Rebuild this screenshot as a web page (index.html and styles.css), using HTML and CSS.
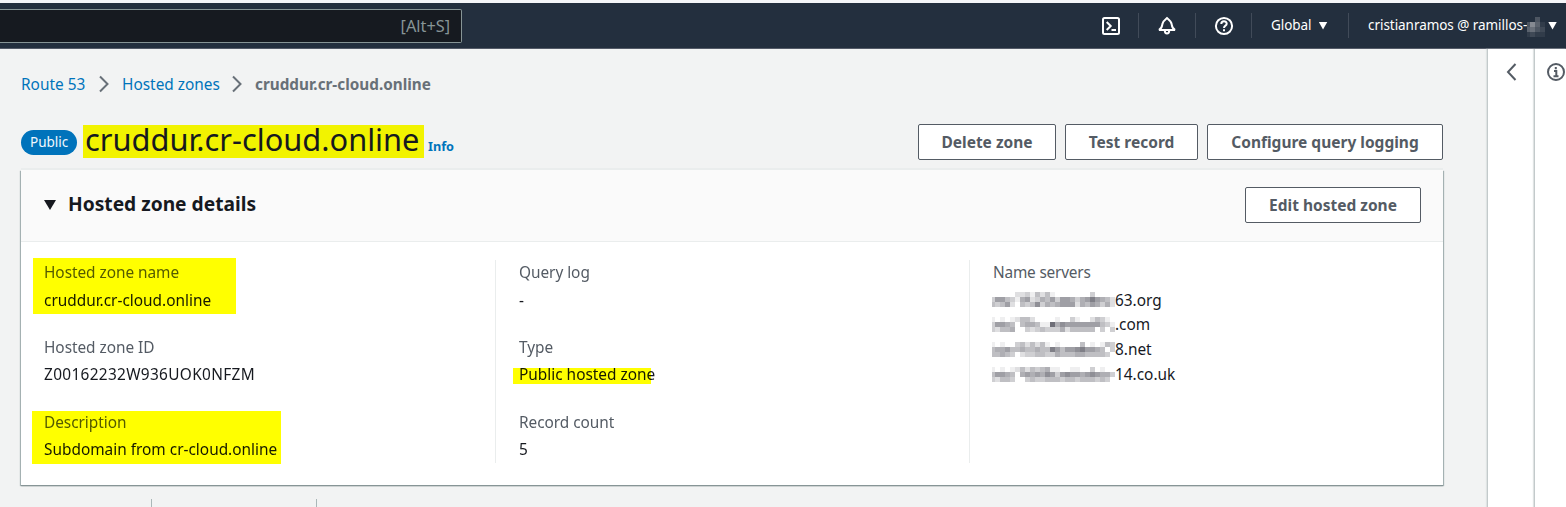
FILE: index.html
```html
<!DOCTYPE html>
<html lang="en">
<head>
<meta charset="utf-8">
<title>Route 53 - Hosted zone</title>
<link rel="stylesheet" href="styles.css">
</head>
<body>
<header class="topbar">
  <div class="search"><span class="hint">[Alt+S]</span></div>
  <nav class="tools">
    <div class="tool shell"><svg width="20" height="20" viewBox="0 0 20 20"><rect x="2" y="2" width="16" height="16" rx="1.5"/><path d="M5.700 6l4 4-4 4M10.500 14H15"/></svg></div>
    <div class="tool bell"><svg width="20" height="20" viewBox="0 0 20 20"><path d="M2 14c3-1.600 3-3.500 3.400-6C5.900 5.200 7.500 4 10 2c2.500 2 4.100 3.200 4.600 6 .4 2.500.4 4.400 3.400 6zM7.800 14.500c0 4 4.400 4 4.400 0"/></svg></div>
    <div class="tool help"><svg width="20" height="20" viewBox="0 0 20 20"><circle cx="10" cy="10" r="8.100"/><path d="M7.300 8c0-3.600 5.400-3.500 5.400-.3 0 2-2.700 1.800-2.700 4.300M10 13.300v1.900"/></svg></div>
    <div class="tool region"><span>Global</span><i class="caret"></i></div>
    <div class="tool account"><span>cristianramos @ ramillos-</span><svg class="mosaic" data-rows="0030,3741,4532,1211" data-first="3" data-dark="1"></svg><i class="caret"></i></div>
  </nav>
</header>
<div class="shellbody">
  <main class="main">
    <div class="crumbs">
      <a class="service">Route 53</a>
      <svg width="12" height="18" viewBox="0 0 12 18"><path d="M2 1.500l7.500 7.500L2 16.500"/></svg>
      <a class="zones">Hosted zones</a>
      <svg width="12" height="18" viewBox="0 0 12 18"><path d="M2 1.500l7.500 7.500L2 16.500"/></svg>
      <b>cruddur.cr-cloud.online</b>
    </div>
    <div class="titlebar">
      <span class="badge">Public</span>
      <h1 class="title">cruddur.cr-cloud.online</h1>
      <a class="info">Info</a>
      <div class="actions">
        <button class="btn delete">Delete zone</button>
        <button class="btn test">Test record</button>
        <button class="btn config">Configure query logging</button>
      </div>
    </div>
    <section class="card">
      <div class="cardhead">
        <i class="caret dark"></i>
        <h2>Hosted zone details</h2>
        <button class="btn edit">Edit hosted zone</button>
      </div>
      <div class="cols">
        <div class="col">
          <dl class="mark name"><dt>Hosted zone name</dt><dd>cruddur.cr-cloud.online</dd></dl>
          <dl><dt>Hosted zone ID</dt><dd class="zone-id">Z00162232W936UOK0NFZM</dd></dl>
          <dl class="mark desc"><dt>Description</dt><dd>Subdomain from cr-cloud.online</dd></dl>
        </div>
        <div class="col">
          <dl><dt>Query log</dt><dd>-</dd></dl>
          <dl class="mark type"><dt>Type</dt><dd>Public hosted zone</dd></dl>
          <dl><dt>Record count</dt><dd>5</dd></dl>
        </div>
        <div class="col">
          <dl><dt class="servers">Name servers</dt>
          <dd class="ns"><svg class="mosaic" data-first="3" data-rows="0000022314241000000030000,3664315623546366535686542,4346204347354566625465352"></svg><span>63.org</span></dd>
          <dd class="ns"><svg class="mosaic" data-first="3" data-rows="1010124420000100310024310,3665404554119576666666431,3244500323433352444440303"></svg><span>.com</span></dd>
          <dd class="ns"><svg class="mosaic" data-first="3" data-rows="1010034242410100004010143,4556445445448646678665403,4454302334433544455444430"></svg><span>8.net</span></dd>
          <dd class="ns"><svg class="mosaic" data-first="3" data-rows="1010124243451100110030100,4665405656576367665676553,3244300343344434434443430"></svg><span>14.co.uk</span></dd>
          </dl>
        </div>
      </div>
    </section>
    <div class="tabs"><i></i><i></i></div>
  </main>
  <aside class="rail back"><svg width="14" height="20" viewBox="0 0 14 20"><path d="M10.500 2L3 10l7.500 8"/></svg></aside>
  <aside class="rail help-rail"><svg width="20" height="20" viewBox="0 0 20 20"><circle cx="10" cy="10" r="8"/><path d="M8 9h2.300v5M7.500 14.200h5M9.800 5v2.200"/></svg></aside>
</div>
<script src="app.js"></script>
</body>
</html>
```
FILE: styles.css
```css
* { box-sizing: border-box; }
body { margin: 0; width: 1566px; height: 507px; overflow: hidden; background: #f2f3f3; font: 15.4px/20px "Noto Sans", "Open Sans", sans-serif; color: #16191f; }
h1, h2, dl, dd { margin: 0; }
span, a, b, h1, h2, dd { white-space: nowrap; }
svg { display: block; fill: none; flex: none; }
.topbar { height: 49px; background: #232f3e; border-top: 3px solid #f4f5f8; border-bottom: 1px solid #545b68; display: flex; justify-content: space-between; align-items: flex-start; }
.search { width: 462px; height: 34px; margin-top: 6px; background: #161a20; border: 1px solid #879596; border-left: 0; border-radius: 0 2px 2px 0; display: flex; justify-content: flex-end; padding: 6px 11px 0 0; color: #879596; }
.hint { font-size: 16.3px; }
.tools { display: flex; padding-top: 10px; color: #fff; font-size: 13.5px; letter-spacing: -.05px; }
.tool { height: 25px; display: flex; align-items: center; border-left: 1px solid #414b59; }
.tool svg { stroke: #fff; stroke-width: 2; }
.tool .mosaic { stroke: none; margin-top: 2px; }
.tool span { margin-top: -1px; }
.shell { border: 0; width: 37px; }
.bell { width: 57px; padding-left: 18px; }
.help { width: 56px; padding-left: 18px; }
.region { width: 97px; padding-left: 19px; }
.account { width: 218px; padding-left: 19px; }
.account span { width: 159px; }
.caret { width: 9px; height: 8px; background: #fff; clip-path: polygon(0 0, 100% 0, 50% 100%); margin-left: 7px; flex: none; }
.account .caret { margin-left: 3px; }
.dark { background: #16191f; }
.shellbody { display: flex; height: 458px; }
.main { width: 1487px; padding: 25px 0 0 21px; }
.crumbs { display: flex; height: 20px; align-items: center; }
.crumbs a, .info { color: #0073bb; }
.crumbs a { padding-top: 2px; }
.crumbs .service { width: 65px; }
.crumbs .zones { width: 97px; }
.crumbs b { color: #687078; font-size: 15.3px; }
.crumbs svg { margin: 0 12px; stroke: #687078; stroke-width: 2; }
.titlebar { display: flex; height: 36px; margin-top: 30px; width: 1422px; align-items: flex-start; }
.badge { width: 56px; height: 25px; margin-top: 6px; border-radius: 13px; background: #0073bb; color: #f2f8fd; font-size: 13.5px; line-height: 24px; padding-left: 9px; }
.title { width: 341px; height: 33px; margin: 1px 0 0 6px; padding-left: 2px; background: #f2f300; font-weight: 400; font-size: 30.8px; line-height: 29px; }
.info { font-size: 12.7px; font-weight: 700; margin: 12px 0 0 4px; }
.actions { display: flex; gap: 9px; margin-left: auto; }
.btn { height: 36px; padding: 0; background: #fff; border: 1px solid #545b64; border-radius: 2px; font: 700 15.5px/34px "Noto Sans", sans-serif; color: #545b64; }
.delete { width: 138px; }
.test { width: 133px; }
.config { width: 236px; }
.edit { width: 176px; margin: 0 0 1px auto; }
.card { width: 1422px; height: 315px; margin-top: 10px; background: #fff; box-shadow: 0 -1px #eaeded, 0 -2px #eaeded, 0 1px 1px 0 #879596, 1px 1px 1px 0 #aab7b8, -1px 1px 1px 0 #aab7b8; }
.cardhead { height: 72px; background: #fafafa; border-bottom: 1px solid #eaeded; display: flex; align-items: center; padding: 0 22px 1px 23px; }
.cardhead .caret { width: 12px; height: 10px; margin: 0; }
h2 { font-size: 19.2px; line-height: 24px; margin: 0 0 2px 12px; }
.cols { display: grid; grid-template-columns: 474px 474px 1fr; padding-top: 18px; }
.col { height: 203px; padding-left: 23px; border-left: 1px solid #eaeded; isolation: isolate; }
.col:first-child { border: 0; }
dl { height: 75px; position: relative; padding-top: 3px; }
dt { color: #545b64; height: 27px; font-size: 15.4px; letter-spacing: -.04px; }
dl:first-child dt { height: 28px; }
dd { height: 20px; }
.servers { letter-spacing: -.2px; }
.zone-id { letter-spacing: .33px; }
.mark::after { content: ""; position: absolute; background: #ff0; mix-blend-mode: multiply; }
.name::after { left: -11px; top: -2px; width: 203px; height: 56px; }
.desc::after { left: -12px; top: 1px; width: 249px; height: 53px; }
.type::after { left: -6px; top: 33px; width: 138px; height: 16px; }
.ns { display: flex; height: 25px; }
.ns .mosaic { margin: 1px 0 0 -1px; }
.ns + .ns span { margin-top: -1px; }
.tabs { display: flex; padding: 14px 0 0 130px; }
.tabs i { width: 165px; height: 10px; border-left: 1px solid #aab7b8; }
.rail { background: #fff; border-left: 1px solid #c3cacb; box-shadow: -1px 0 1px #dfe3e3; padding-top: 13px; flex: none; }
.rail svg { stroke: #545b64; stroke-width: 2; }
.back { width: 47px; padding-left: 17px; }
.help-rail { width: 32px; padding-left: 11px; }
```
FILE: app.js
```js
const ns = "http://www.w3.org/2000/svg";
document.querySelectorAll(".mosaic").forEach((svg) => {
  const rows = svg.dataset.rows.split(",");
  const first = Number(svg.dataset.first);
  const shade = svg.dataset.dark
    ? (n) => `rgb(${35 + n * 14},${47 + n * 13},${62 + n * 12})`
    : (n) => `rgb(${255 - n * 16},${255 - n * 16},${255 - n * 15})`;
  svg.setAttribute("width", first + (rows[0].length - 1) * 5);
  svg.setAttribute("height", rows.length * 5);
  rows.forEach((row, y) => {
    [...row].forEach((n, i) => {
      const rect = document.createElementNS(ns, "rect");
      rect.setAttribute("x", i ? first + (i - 1) * 5 : 0);
      rect.setAttribute("y", y * 5);
      rect.setAttribute("width", i ? 5 : first);
      rect.setAttribute("height", 5);
      rect.setAttribute("fill", shade(Number(n)));
      svg.appendChild(rect);
    });
  });
});
```
